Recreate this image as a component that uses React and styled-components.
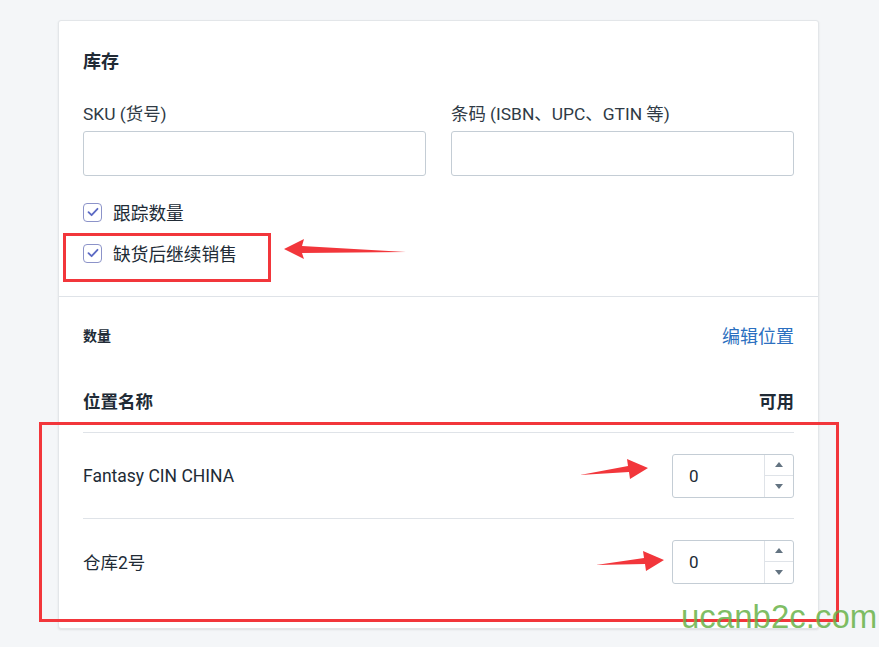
import React from "react";
import styled, { createGlobalStyle } from "styled-components";

const GlobalStyle = createGlobalStyle`
  html, body {
    margin: 0;
    padding: 0;
    background: #f4f6f8;
    font-family: Roboto, "Noto Sans CJK SC", sans-serif;
    color: #212b36;
  }
`;

const Page = styled.div`
  position: relative;
  width: 879px;
  height: 647px;
  padding-top: 20px;
  box-sizing: border-box;
  overflow: hidden;
`;

const Card = styled.div`
  margin-left: 58px;
  width: 761px;
  height: 609px;
  box-sizing: border-box;
  background: #fff;
  border: 1px solid #e3e6e9;
  border-radius: 3px;
  box-shadow: 0 1px 2px rgba(63, 63, 68, 0.12);
`;

const Section = styled.div`
  padding: ${(p) => p.$pad};
  border-top: ${(p) => (p.$divided ? "1px solid #dfe3e8" : "none")};
`;

const Heading = styled.h2`
  margin: 0;
  font-size: 18px;
  line-height: 24px;
  font-weight: 700;
`;

const FieldGrid = styled.div`
  display: grid;
  grid-template-columns: 1fr 1fr;
  gap: 25px;
  margin-top: 30px;
`;

const Field = styled.div`
  display: flex;
  flex-direction: column;
`;

const Label = styled.label`
  font-size: 17.4px;
  line-height: 20px;
  margin-bottom: 7px;
  color: #2f3a45;
`;

const TextInput = styled.div`
  height: 45px;
  box-sizing: border-box;
  border: 1px solid #c4cdd5;
  border-radius: 3px;
  background: #fff;
`;

const CheckList = styled.div`
  display: flex;
  flex-direction: column;
  gap: 17px;
  margin-top: 24px;
`;

const CheckRow = styled.div`
  display: flex;
  align-items: center;
  height: 24px;
  gap: 11px;
  font-size: 17.7px;
`;

const Box = styled.span`
  width: 19px;
  height: 19px;
  box-sizing: border-box;
  border: 1px solid #8c93c9;
  border-radius: 4px;
  display: flex;
  align-items: center;
  justify-content: center;
`;

const HeadRow = styled.div`
  display: flex;
  justify-content: space-between;
  align-items: center;
  height: 20px;
`;

const SubTitle = styled.span`
  font-size: 14px;
  font-weight: 700;
`;

const EditLink = styled.a`
  font-size: 18px;
  color: #2b6fc0;
  text-decoration: none;
`;

const TableHead = styled.div`
  display: flex;
  justify-content: space-between;
  align-items: center;
  margin-top: 43px;
  height: 24px;
  padding-bottom: 20px;
  font-size: 17.5px;
  font-weight: 700;
`;

const Row = styled.div`
  display: flex;
  justify-content: space-between;
  align-items: center;
  height: 85px;
  border-top: 1px solid #dfe3e8;
  font-size: 17.5px;
`;

const NumberInput = styled.div`
  display: flex;
  width: 122px;
  height: 44px;
  box-sizing: border-box;
  border: 1px solid #c4cdd5;
  border-radius: 3px;
`;

const NumberValue = styled.span`
  flex: 1;
  display: flex;
  align-items: center;
  padding-left: 16px;
  font-size: 17px;
`;

const Spinner = styled.div`
  width: 28px;
  display: flex;
  flex-direction: column;
  border-left: 1px solid #dfe3e8;
`;

const SpinBtn = styled.span`
  flex: 1;
  display: flex;
  align-items: center;
  justify-content: center;
  & + & {
    border-top: 1px solid #dfe3e8;
  }
`;

const Highlight = styled.div`
  position: absolute;
  box-sizing: border-box;
  border: 3px solid #f2363b;
`;

const Arrow = styled.svg`
  position: absolute;
`;

const Watermark = styled.span`
  position: absolute;
  left: 681px;
  top: 597px;
  font-family: "Liberation Sans", sans-serif;
  font-size: 33px;
  line-height: 40px;
  color: rgba(104, 178, 72, 0.85);
`;

function Check() {
  return (
    <Box>
      <svg width="12" height="10" viewBox="0 0 12 10">
        <path d="M1.5 5.2 L4.6 8.2 L10.5 1.8" fill="none" stroke="#5c6ac4" strokeWidth="1.8" strokeLinecap="round" strokeLinejoin="round" />
      </svg>
    </Box>
  );
}

function Qty({ value }) {
  return (
    <NumberInput>
      <NumberValue>{value}</NumberValue>
      <Spinner>
        <SpinBtn>
          <svg width="8" height="5" viewBox="0 0 8 5"><path d="M0 5 L4 0 L8 5Z" fill="#637381" /></svg>
        </SpinBtn>
        <SpinBtn>
          <svg width="8" height="5" viewBox="0 0 8 5"><path d="M0 0 L4 5 L8 0Z" fill="#637381" /></svg>
        </SpinBtn>
      </Spinner>
    </NumberInput>
  );
}

const locations = [
  { name: "Fantasy CIN CHINA", qty: 0 },
  { name: "仓库2号", qty: 0 },
];

export default function App() {
  return (
    <Page>
      <GlobalStyle />
      <Card>
        <Section $pad="29px 24px 31px">
          <Heading>库存</Heading>
          <FieldGrid>
            <Field>
              <Label>SKU (货号)</Label>
              <TextInput />
            </Field>
            <Field>
              <Label>条码 (ISBN、UPC、GTIN 等)</Label>
              <TextInput />
            </Field>
          </FieldGrid>
          <CheckList>
            <CheckRow><Check />跟踪数量</CheckRow>
            <CheckRow><Check />缺货后继续销售</CheckRow>
          </CheckList>
        </Section>
        <Section $divided $pad="28px 24px 24px">
          <HeadRow>
            <SubTitle>数量</SubTitle>
            <EditLink>编辑位置</EditLink>
          </HeadRow>
          <TableHead>
            <span>位置名称</span>
            <span>可用</span>
          </TableHead>
          {locations.map((l) => (
            <Row key={l.name}>
              <span>{l.name}</span>
              <Qty value={l.qty} />
            </Row>
          ))}
        </Section>
      </Card>

      <Highlight style={{ left: 63, top: 233, width: 208, height: 49 }} />
      <Highlight style={{ left: 39, top: 422, width: 800, height: 200 }} />

      <Arrow style={{ left: 282, top: 236 }} width="126" height="26" viewBox="0 0 126 26">
        <path d="M2 13 L22 3 L20 10 L124 16 L20 17 L22 23 Z" fill="#f2363b" />
      </Arrow>
      <Arrow style={{ left: 578, top: 458 }} width="72" height="26" viewBox="0 0 72 26">
        <path d="M70 10 L49 1 L50 8 L2 17 L51 14 L52 21 Z" fill="#f2363b" />
      </Arrow>
      <Arrow style={{ left: 594, top: 550 }} width="72" height="26" viewBox="0 0 72 26">
        <path d="M70 10 L49 1 L50 8 L2 15 L51 14 L52 21 Z" fill="#f2363b" />
      </Arrow>

      <Watermark>ucanb2c.com</Watermark>
    </Page>
  );
}
